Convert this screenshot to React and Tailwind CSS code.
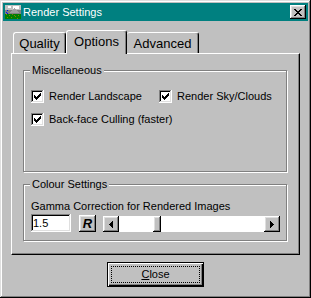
import React from "react";

const raised =
  "shadow-[inset_-1px_-1px_#000000,inset_1px_1px_#ffffff,inset_-2px_-2px_#808080,inset_2px_2px_#dfdfdf]";
const sunken =
  "shadow-[inset_-1px_-1px_#ffffff,inset_1px_1px_#808080,inset_-2px_-2px_#dfdfdf,inset_2px_2px_#000000]";

const AppIcon = () => (
  <svg width="16" height="16" viewBox="0 0 16 16" shapeRendering="crispEdges">
    <rect x="0" y="1" width="16" height="14" fill="#808080" />
    <rect x="0" y="1" width="16" height="5" fill="#c0c0c0" />
    <rect x="8" y="2" width="6" height="3" fill="#ffffff" />
    <rect x="3" y="2" width="3" height="2" fill="#ffffff" />
    <polygon points="4,9 9,4 14,9" fill="#a0a0a0" />
    <rect x="2" y="6" width="1" height="1" fill="#0000ff" />
    <rect x="1" y="8" width="1" height="1" fill="#0000ff" />
    <rect x="2" y="9" width="1" height="1" fill="#0000ff" />
    <rect x="0" y="10" width="16" height="5" fill="#008000" />
    <path
      d="M1 10h1v1h-1z M4 11h1v1h-1z M7 10h1v1h-1z M10 12h1v1h-1z M13 11h1v1h-1z M2 13h1v1h-1z M6 13h1v1h-1z M12 14h1v1h-1z M9 11h1v1h-1z"
      fill="#808000"
    />
  </svg>
);

const CloseGlyph = () => (
  <svg width="8" height="7" viewBox="0 0 8 7" shapeRendering="crispEdges">
    <path
      d="M0 0h2v1h-2z M6 0h2v1h-2z M1 1h2v1h-2z M5 1h2v1h-2z M2 2h4v1h-4z M3 3h2v1h-2z M2 4h4v1h-4z M1 5h2v1h-2z M5 5h2v1h-2z M0 6h2v1h-2z M6 6h2v1h-2z"
      fill="#000"
    />
  </svg>
);

const Check = () => (
  <svg width="7" height="7" viewBox="0 0 7 7" shapeRendering="crispEdges">
    <path
      d="M6 0h1v1h-1z M5 1h2v1h-2z M0 2h1v1h-1z M4 2h3v1h-3z M0 3h2v1h-2z M3 3h3v1h-3z M0 4h5v1h-5z M1 5h3v1h-3z M2 6h1v1h-1z"
      fill="#000"
    />
  </svg>
);

const Arrow = ({ dir }) => (
  <svg width="4" height="7" viewBox="0 0 4 7" shapeRendering="crispEdges">
    {dir === "left" ? (
      <path d="M0 3h1v1h-1z M1 2h1v3h-1z M2 1h1v5h-1z M3 0h1v7h-1z" fill="#000" />
    ) : (
      <path d="M3 3h1v1h-1z M2 2h1v3h-1z M1 1h1v5h-1z M0 0h1v7h-1z" fill="#000" />
    )}
  </svg>
);

const CheckBox = ({ label }) => (
  <div className="flex items-center">
    <div className={`w-[13px] h-[13px] bg-white flex items-center justify-center ${sunken}`}>
      <Check />
    </div>
    <span className="ml-[5px] leading-[13px]">{label}</span>
  </div>
);

const GroupBox = ({ title, className, children }) => (
  <div
    className={`relative border border-[#808080] shadow-[1px_1px_0_#ffffff,inset_1px_1px_0_#ffffff] ${className}`}
  >
    <span className="absolute left-[6px] -top-[7px] px-[2px] bg-[#c0c0c0] leading-[13px]">
      {title}
    </span>
    {children}
  </div>
);

export default function App() {
  return (
    <div className="w-[311px] h-[298px] bg-[#c0c0c0] p-[3px] flex flex-col font-['Liberation_Sans',Arial,sans-serif] text-[11px] text-black shadow-[inset_-1px_-1px_#000000,inset_1px_1px_#dfdfdf,inset_-2px_-2px_#808080,inset_2px_2px_#ffffff]">
      {/* title bar */}
      <div className="h-[18px] bg-[#008080] flex items-center px-[2px]">
        <AppIcon />
        <span className="ml-[2px] text-white leading-none">Render Settings</span>
        <div className={`ml-auto w-[16px] h-[14px] bg-[#c0c0c0] flex items-center justify-center ${raised}`}>
          <CloseGlyph />
        </div>
      </div>

      {/* tabs */}
      <div className="mt-[9px] ml-[8px] w-[289px] flex flex-col">
        <div className="flex items-end h-[23px] pl-[2px] text-[13px]">
          <div className="w-[53px] h-[21px] pt-[3px] text-center leading-[15px] border-t border-l border-white border-r border-r-black rounded-t-[3px] shadow-[inset_-1px_0_#808080]">
            Quality
          </div>
          <div className="relative z-10 w-[61px] h-[24px] -mb-[1px] pt-[3px] bg-[#c0c0c0] text-center leading-[15px] border-t border-l border-white border-r border-r-black rounded-t-[3px] shadow-[inset_-1px_0_#808080]">
            Options
          </div>
          <div className="w-[72px] h-[21px] pt-[3px] text-center leading-[15px] border-t border-white border-r border-r-black rounded-t-[3px] shadow-[inset_-1px_0_#808080]">
            Advanced
          </div>
        </div>

        {/* panel */}
        <div className="h-[202px] border-t border-l border-white border-r border-b border-r-black border-b-black shadow-[inset_-1px_-1px_#808080] pt-[16px] pl-[11px] pr-[12px]">
          <GroupBox title="Miscellaneous" className="h-[102px] pt-[19px] pl-[7px]">
            <div className="flex">
              <div className="w-[128px]">
                <CheckBox label="Render Landscape" />
              </div>
              <CheckBox label="Render Sky/Clouds" />
            </div>
            <div className="mt-[10px]">
              <CheckBox label="Back-face Culling (faster)" />
            </div>
          </GroupBox>

          <GroupBox title="Colour Settings" className="mt-[12px] h-[57px] pt-[15px] pl-[7px]">
            <div className="leading-[13px]">Gamma Correction for Rendered Images</div>
            <div className="mt-[1px] flex items-end">
              <div className={`w-[40px] h-[18px] bg-white pl-[2px] pt-[2px] leading-[14px] ${sunken}`}>
                1.5
              </div>
              <div className={`ml-[8px] w-[17px] h-[17px] flex items-center justify-center font-bold italic text-[13px] leading-none ${raised}`}>
                R
              </div>
              <div className="ml-[7px] w-[177px] h-[16px] flex bg-white">
                <div className={`w-[16px] h-[16px] bg-[#c0c0c0] flex items-center justify-center ${raised}`}>
                  <Arrow dir="left" />
                </div>
                <div className="flex-1">
                  <div className={`ml-[34px] w-[8px] h-[16px] bg-[#c0c0c0] ${raised}`} />
                </div>
                <div className={`w-[16px] h-[16px] bg-[#c0c0c0] flex items-center justify-center ${raised}`}>
                  <Arrow dir="right" />
                </div>
              </div>
            </div>
          </GroupBox>
        </div>
      </div>

      {/* close button */}
      <div className="mt-[7px] flex justify-center">
        <div className="w-[97px] h-[25px] border border-black p-[3px] flex shadow-[inset_1px_1px_#ffffff,inset_-1px_-1px_#000000,inset_-2px_-2px_#808080]">
          <div className="flex-1 border border-dotted border-black flex items-center justify-center leading-[13px]">
            <span>
              <span className="underline">C</span>lose
            </span>
          </div>
        </div>
      </div>
    </div>
  );
}
